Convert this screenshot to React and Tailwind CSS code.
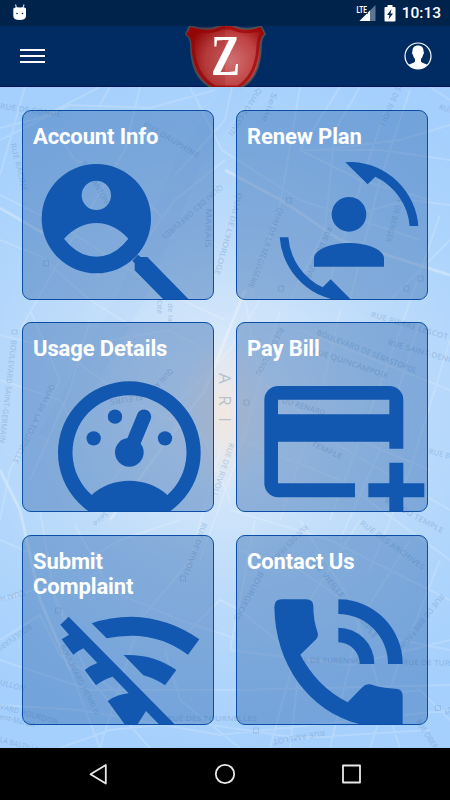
import React from "react";

// Street names: text, start point, end point of the baseline's centre line.
const streets = [
  ["RUE DE CONDÉ", 0, 106, 61, 114],
  ["RUE DAUPHINE", 144, 123, 199, 156],
  ["RUE RACINE", 13, 143, 25, 191],
  ["RUE DANTON", 83, 162, 107, 203],
  ["QUAI DES ORFEVRES", 222, 186, 163, 238],
  ["MARAIS", 209, 208, 208, 248],
  ["QUAI DE L'HORLOGE", 240, 193, 217, 275],
  ["de la", 171, 303, 171, 322],
  ["Cité", 160, 300, 160, 314],
  ["QUAI DE CONTI", 260, 89, 230, 135],
  ["Seine", 275, 93, 264, 122],
  ["RUE DE RIVOLI", 403, 78, 382, 125],
  ["RUE", 439, 107, 453, 110],
  ["QUAI DE LA MEGISSERIE", 281, 208, 251, 288],
  ["RUE DE BERGER", 403, 190, 388, 242],
  ["RUE DU LOUVRE", 330, 227, 306, 283],
  ["BOULEVARD SAINT-GERMAIN", 14, 340, 2, 443],
  ["QUAI DE LA TOURNELLE", 53, 385, 15, 463],
  ["QUAI AUX", 172, 370, 150, 393],
  ["FLEURS", 143, 397, 110, 402],
  ["Seine", 107, 513, 94, 525],
  ["RUE DE RIVOLI", 232, 443, 215, 495],
  ["RUE DE RIVOLI", 205, 523, 186, 575],
  ["RUE PIERRE LESCOT", 371, 314, 448, 337],
  ["BOULEVARD DE SÉBASTOPOL", 317, 332, 417, 371],
  ["RUE SAINT-DENIS", 388, 342, 455, 361],
  ["RUE QUINCAMPOIX", 313, 350, 388, 376],
  ["RUE DU RENARD", 266, 395, 325, 413],
  ["TEMPLE", 312, 443, 342, 457],
  ["RUE DU NOUVOU", 282, 328, 258, 375],
  ["RUE B", 429, 451, 450, 456],
  ["RUE DU TEMPLE", 385, 500, 443, 531],
  ["RUE DES ARCHIVES", 361, 522, 424, 568],
  ["RUE DES FRANCS", 307, 526, 267, 566],
  ["BOURGEOIS", 262, 572, 236, 620],
  ["RUE VIEILLE DU TEMPLE", 311, 558, 376, 637],
  ["RUE DE BRETAGNE", 443, 595, 398, 652],
  ["RUE DE TURENNE", 292, 660, 360, 661],
  ["RUE DE TUR", 403, 662, 450, 663],
  ["RUE DES TOURNELLES", 167, 718, 257, 718],
  ["RUE AMELOT", 325, 733, 273, 742],
  ["RUE OBER", 418, 720, 436, 748],
  ["LOT", 456, 708, 444, 712],
  ["QUAI H", 25, 593, 0, 599],
  ["BOULEVARD", 31, 626, -3, 650],
  ["BOULEVARD HENRI IV", 62, 645, 98, 715],
  ["ULLON", 0, 682, 25, 689],
  ["VARD BOURDON", 0, 706, 58, 722],
  ["ent-Martin", 0, 716, 35, 725],
  ["LA BASTILLE", 0, 739, 38, 750],
];

const roads =
  "M0 128L40 118 100 87M0 140L70 105 150 108 215 90M25 87L0 175M110 87L100 105M140 87L125 150 60 260 20 330M0 195L60 225 160 290 225 320M0 208L55 240 100 275M0 240L40 256 90 300 130 325M55 130L75 160 130 185 165 220M175 175L225 120 232 87M150 235L175 200 225 160M190 87L222 150 300 200 420 240M225 170L281 200 340 240 450 275M300 87L281 200 250 300M340 87L300 150 360 180 430 200M360 87L335 130 325 230 290 300M385 110L330 280M410 90L380 180 350 300M450 125L400 140 320 150M450 160L380 150 300 150M450 205L410 200 330 220M430 87L450 100M440 215L400 330 330 520M450 240L390 300M0 335L60 350 130 400 210 440M0 380L60 400 80 435M30 310L60 380 10 470 0 520M90 320L70 390 30 480M110 340L170 330 205 350M245 290L205 390 160 450 110 520M260 300L230 350 150 430 90 510M150 410L200 430 230 500M0 470L20 510 40 600 70 670 100 748M40 510L55 600 90 680 150 748M0 540L70 570 120 540 180 520M75 525L110 590 180 620 240 640M220 450L190 560 140 620 100 748M245 300L260 380 310 420 430 470M260 400L450 510M280 310L260 380 240 450 200 560M300 330L450 390M340 310L320 400 280 520M420 320L380 450 340 540M450 340L410 470 370 570M240 440L340 480 450 560M230 510L330 540 450 600M240 550L300 570 400 640 450 650M255 520L240 600 230 650M300 520L350 600 400 748M360 520L310 600 270 748M410 540L360 620 330 748M440 560L400 660 370 748M0 600L50 585 80 650M0 640L40 615 60 655 130 700M0 660L90 690 230 690 450 685M0 705L80 710 220 735 450 710M60 748L110 730 190 722 300 738 430 730M230 650L350 665 450 640M240 610L300 660 290 748M180 640L220 600 240 610M165 650L180 700 240 748M350 700L420 690 450 720";

function CityMap() {
  return (
    <svg className="absolute inset-0 h-full w-full" viewBox="0 87 450 661" aria-hidden="true">
      <defs>
        <radialGradient id="glow" gradientUnits="userSpaceOnUse" cx="222" cy="410" r="350">
          <stop offset="0" stopColor="#e8eef7" />
          <stop offset=".2" stopColor="#d5e7fa" />
          <stop offset=".5" stopColor="#bedcfa" />
          <stop offset=".8" stopColor="#add4fc" />
          <stop offset="1" stopColor="#a5cffc" />
        </radialGradient>
        <radialGradient id="warm">
          <stop offset="0" stopColor="#f3e6dc" stopOpacity=".8" />
          <stop offset="1" stopColor="#f3e6dc" stopOpacity="0" />
        </radialGradient>
      </defs>
      <rect y="87" width="450" height="661" fill="url(#glow)" />
      <ellipse cx="224" cy="415" rx="45" ry="80" fill="url(#warm)" />
      <path
        d="M240 87L190 160 130 300 50 440"
        fill="none"
        stroke="#8bbcf5"
        strokeOpacity=".07"
        strokeWidth="26"
      />
      <path d={roads} fill="none" stroke="#fff" strokeOpacity=".17" strokeWidth="2" />
      <path
        d="M0 208L55 240 100 275M245 290L205 390 160 450 110 520M225 170L281 200 340 240 450 275M0 470L20 510 40 600 70 670"
        fill="none"
        stroke="#fff"
        strokeOpacity=".18"
        strokeWidth="3.5"
      />
      <g fill="#5f86b3" fillOpacity=".3" fontFamily="'Open Sans', sans-serif" fontSize="7.8" fontWeight="600">
        {streets.map(([name, x1, y1, x2, y2], i) => {
          const angle = (Math.atan2(y2 - y1, x2 - x1) * 180) / Math.PI;
          return (
            <text
              key={i}
              transform={`translate(${x1} ${y1}) rotate(${angle})`}
              y="2.8"
              textLength={Math.hypot(x2 - x1, y2 - y1)}
              lengthAdjust="spacingAndGlyphs"
            >
              {name}
            </text>
          );
        })}
      </g>
      <text
        transform="translate(218.500 373) rotate(90)"
        fill="#9aa8bb"
        fillOpacity=".65"
        fontFamily="'Open Sans', sans-serif"
        fontSize="17"
        textLength="49"
      >
        ARI
      </text>
      <g fill="none" stroke="#5f86b3" strokeOpacity=".25">
        <path d="M43.500 261h5v5h-5zM286.500 198h5v5h-5zM278.500 286h5v5h-5zM404 286h5v5h-5zM418 276h5v5h-5zM244 400h5v5h-5zM12 330h5v4h-5zM55.500 608h5v5h-5zM180.500 576h5v5h-5zM253.500 728h5v5h-5zM435.500 705.500h5v5h-5z" />
      </g>
    </svg>
  );
}

const cards = [
  {
    title: "Account Info",
    box: "66 60 576 570",
    art: (
      <>
        <path
          fillRule="evenodd"
          d="M289 222a164 164 0 1 1 0 328a164 164 0 1 1 0-328ZM289 272a44 44 0 1 0 0 88a44 44 0 1 0 0-88ZM192 446Q236 399 289 399T385 446Q344 500 289 500T192 446Z"
        />
        <path d="M397 512L404 520V541L494 632H570L442 501H422L414 494Z" />
      </>
    ),
  },
  {
    title: "Renew Plan",
    box: "33 60 576 570",
    art: (
      <>
        <circle cx="372" cy="373" r="52" />
        <path d="M267 530V505C267 478 320 459 372 459S477 478 477 505V530Z" />
        <path d="M361 217Q368 215 382 216A208 208 0 0 1 580 408H554A182 182 0 0 0 451 260L428 283Z" />
        <path d="M164 442H190A182 182 0 0 0 293 592L317 568L383 634H372A208 208 0 0 1 164 442Z" />
      </>
    ),
  },
  {
    title: "Usage Details",
    box: "66 37 576 570",
    art: (
      <>
        <path
          fillRule="evenodd"
          d="M388 215a214 214 0 1 1 0 428a214 214 0 1 1 0-428ZM275 556A171 171 0 1 1 502 556A171 171 0 0 0 275 556Z"
        />
        <circle cx="281" cy="386" r="21.500" />
        <circle cx="345" cy="321" r="21.500" />
        <circle cx="495" cy="386" r="21.500" />
        <circle cx="388" cy="428" r="43" />
        <path d="M432 321L402 394" fill="none" stroke="#1257b0" strokeWidth="43" strokeLinecap="round" />
      </>
    ),
  },
  {
    title: "Pay Bill",
    box: "33 37 576 570",
    art: (
      <>
        <path
          fillRule="evenodd"
          d="M160 229H493a42 42 0 0 1 42 42V417H493V396H159V521H390V563H160a42 42 0 0 1-42-42V271a42 42 0 0 1 42-42ZM159 270V314H493V270Z"
        />
        <path d="M493 459H535V521H598V563H535V610H493V563H430V521H493Z" />
      </>
    ),
  },
  {
    title: "Submit Complaint",
    box: "66 45 576 570",
    art: (
      <>
        <path d="M275 310Q330 290 395 290Q507 293 598 358L564 404Q487 347 395 347Q355 347 320 355Z" />
        <path d="M371 405Q460 401 529 450L495 496Q465 475 430 466Z" />
        <path d="M206 290L528 617H481L438 573L410 617H377L323 543Q350 524 386 520L338 470Q310 478 288 496L254 450Q271 436 292 429L250 385Q235 392 220 404L185 358L207 344L181 314Z" />
      </>
    ),
  },
  {
    title: "Contact Us",
    box: "33 45 576 570",
    art: (
      <>
        <path d="M170 238H243Q265 238 265 259Q265 302 278 338Q281 349 274 357L226 404C258 466 305 514 368 547L412 502Q422 490 436 493Q475 506 512 506Q533 507 533 528V617H424C260 585 150 440 148 260Q149 238 170 238Z" />
        <path d="M340 238A193 193 0 0 1 533 432H489A149 149 0 0 0 340 282Z" />
        <path d="M340 323A108 108 0 0 1 448 432H404A64 64 0 0 0 340 367Z" />
      </>
    ),
  },
];

function Card({ title, box, art }) {
  return (
    <button className="relative block h-[190px] overflow-hidden rounded-[9px] border border-[#0c4ea6] bg-[#14509f]/35 text-left">
      <svg className="absolute -top-px -left-px h-[190px] w-[192px]" viewBox={box} fill="#1257b0" aria-hidden="true">
        {art}
      </svg>
      <span className="relative block h-full w-[150px] pt-[13px] pl-[10px] text-[22px] leading-[25px] font-bold tracking-[-0.12px] text-white">
        {title}
      </span>
    </button>
  );
}

function StatusBar() {
  return (
    <div className="flex h-[26px] items-center justify-between bg-[#00234c] pr-[9px] pl-[12px]">
      <svg className="h-[18px] w-4" viewBox="0 0 16 18">
        <path d="M3.500 0.500L4.500 4M12 0.500L11 4" stroke="#c3d0e0" strokeWidth="1.200" />
        <path d="M1.300 4.500Q4 2.500 8 3.500Q12 2.500 14 4.500V12Q14 16 7.700 16Q1.300 16 1.300 12Z" fill="#fff" />
        <circle cx="5" cy="9.500" r=".8" fill="#00234c" />
        <circle cx="10.500" cy="9.500" r=".8" fill="#00234c" />
      </svg>
      <div className="flex items-center">
        <svg className="h-[18px] w-5" viewBox="0 0 20 18">
          <path d="M19.500 1V17H3.500Z" fill="#5b7593" />
          <path d="M14 6.500V17H3.500Z" fill="#fff" />
          <text
            x="0.500"
            y="8.500"
            fill="#fff"
            stroke="#00234c"
            strokeWidth="2"
            paintOrder="stroke"
            fontSize="8.500"
            fontWeight="700"
            fontFamily="Roboto, sans-serif"
            textLength="10.500"
            lengthAdjust="spacingAndGlyphs"
          >
            LTE
          </text>
        </svg>
        <svg className="ml-[8px] h-[17px] w-3" viewBox="0 0 12 17">
          <path d="M3.500 0h5v2H10.500Q11.500 2 11.500 3V15.500Q11.500 16.500 10.500 16.500H1.500Q.5 16.500 .5 15.500V3Q.5 2 1.500 2H3.500Z" fill="#fff" />
          <path d="M7.500 4L3 10H5.500L4.500 14.500L9 8.500H6.500Z" fill="#00234c" />
        </svg>
        <span className="ml-[6px] pt-[2px] text-[15.5px] leading-none font-medium text-white">10:13</span>
      </div>
    </div>
  );
}

function Header() {
  return (
    <header className="flex h-[61px] items-center justify-between border-b border-[#00125a] bg-[#002c63] pr-[18px] pl-[20px]">
      <button className="flex w-[52px] flex-col gap-[4px]" aria-label="Menu">
        <span className="h-[2px] w-[25px] bg-white" />
        <span className="h-[2px] w-[25px] bg-white" />
        <span className="h-[2px] w-[25px] bg-white" />
      </button>
      <svg className="ml-[9px] h-[61px] w-[84px] self-start" viewBox="184 26 84 61">
        <defs>
          <radialGradient id="shield" gradientUnits="userSpaceOnUse" cx="231" cy="61" r="44">
            <stop offset="0" stopColor="#d07172" />
            <stop offset=".6" stopColor="#bf4243" />
            <stop offset="1" stopColor="#980808" />
          </radialGradient>
        </defs>
        <path
          d="M190 26Q207 32 222 25H231Q246 32 261 26L265 34Q261 38 261 45C261 68 253 84 237 89H216C200 84 191 69 191 45Q191 38 186 34Z"
          fill="url(#shield)"
          stroke="#4b5256"
          strokeWidth="1.800"
        />
        <path d="M192 29Q208 35 222 28H231Q246 35 260 29L262 34Q258 38 258 46C257 65 251 79 238 87H215C201 79 194 65 193 46Q193 38 188 34Z" fill="none" stroke="#a00508" strokeWidth="3" strokeOpacity=".75" />
        <path d="M190 26H225V89H216C200 84 191 69 191 45Q191 38 186 34Z" fill="#700000" fillOpacity=".14" />
        <text
          transform="translate(211 74.500) scale(1.06 1)"
          fill="#fff"
          fontFamily="'Liberation Serif', serif"
          fontWeight="700"
          fontSize="57"
          textLength="27.500"
          lengthAdjust="spacingAndGlyphs"
        >
          Z
        </text>
      </svg>
      <button className="flex w-[61px] justify-end" aria-label="Profile">
        <svg className="h-7 w-7" viewBox="0 0 28 28">
          <defs><clipPath id="face"><circle cx="14" cy="14" r="13" /></clipPath></defs>
          <g clipPath="url(#face)" fill="#fff">
            <path d="M14 3.500C18 3.500 19.800 6 19.500 9.500C20.200 10 20 12 19 13C18.600 15 17.800 16 17 17V19.500C18 21.500 24 21.500 25 25V28H3V25C4 21.500 10 21.500 11 19.500V17C10.200 16 9.400 15 9 13C8 12 7.800 10 8.500 9.500C8.200 6 10 3.500 14 3.500Z" />
          </g>
          <circle cx="14" cy="14" r="13" fill="none" stroke="#fff" strokeWidth="1.200" />
        </svg>
      </button>
    </header>
  );
}

export default function App() {
  return (
    <div className="flex h-[800px] w-[450px] flex-col overflow-hidden bg-black font-[Roboto,sans-serif]">
      <StatusBar />
      <Header />
      <main className="relative h-[661px] shrink-0 overflow-hidden">
        <CityMap />
        <div className="relative grid grid-cols-2 gap-x-[22px] gap-y-[22.500px] px-[22px] pt-[22.500px]">
          {cards.map((card) => (
            <Card key={card.title} {...card} />
          ))}
        </div>
      </main>
      <nav className="flex h-[52px] shrink-0 items-center justify-between bg-black pr-[88px] pl-[88px]">
        <svg className="h-[22px] w-[22px]" viewBox="0 0 22 22" fill="none" stroke="#e8e8e8" strokeWidth="1.800" strokeLinejoin="round">
          <path d="M17.800 2V20.500L2.500 11.200Z" />
        </svg>
        <svg className="h-[22px] w-[22px]" viewBox="0 0 22 22" fill="none" stroke="#e8e8e8" strokeWidth="1.800">
          <circle cx="11" cy="11" r="9.200" />
        </svg>
        <svg className="h-[22px] w-[22px]" viewBox="0 0 22 22" fill="none" stroke="#e8e8e8" strokeWidth="1.800" strokeLinejoin="round">
          <rect x="3" y="2.500" width="17" height="17" />
        </svg>
      </nav>
    </div>
  );
}
